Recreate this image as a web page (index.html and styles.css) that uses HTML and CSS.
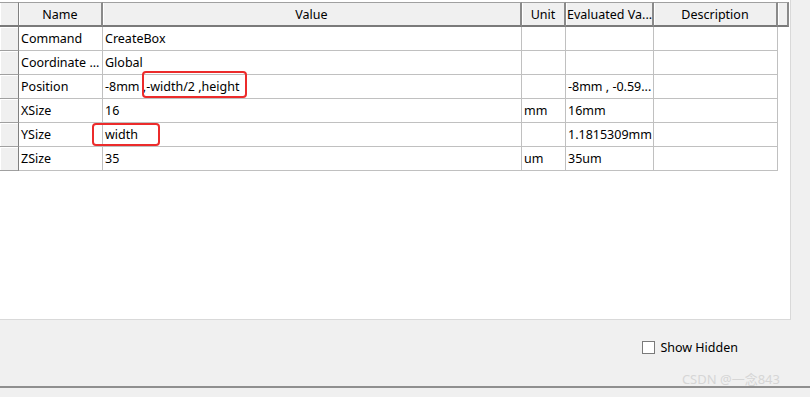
FILE: index.html
```html
<!DOCTYPE html>
<html lang="en">
<head>
    <meta charset="UTF-8">
    <title>Command Properties</title>
    <link rel="stylesheet" href="styles.css">
</head>
<body>
    <div class="panel">
        <div class="grid">
            <div class="hcell corner"></div>
            <div class="hcell">Name</div>
            <div class="hcell">Value</div>
            <div class="hcell">Unit</div>
            <div class="hcell left">Evaluated Va...</div>
            <div class="hcell">Description</div>
            <div class="hcell filler"></div>

            <div class="rhead"></div>
            <div class="cell">Command</div>
            <div class="cell">CreateBox</div>
            <div class="cell"></div>
            <div class="cell"></div>
            <div class="cell"></div>
            <div class="blank"></div>

            <div class="rhead"></div>
            <div class="cell">Coordinate ...</div>
            <div class="cell">Global</div>
            <div class="cell"></div>
            <div class="cell"></div>
            <div class="cell"></div>
            <div class="blank"></div>

            <div class="rhead"></div>
            <div class="cell">Position</div>
            <div class="cell">-8mm ,-width/2 ,height</div>
            <div class="cell"></div>
            <div class="cell">-8mm , -0.59...</div>
            <div class="cell"></div>
            <div class="blank"></div>

            <div class="rhead"></div>
            <div class="cell">XSize</div>
            <div class="cell">16</div>
            <div class="cell">mm</div>
            <div class="cell">16mm</div>
            <div class="cell"></div>
            <div class="blank"></div>

            <div class="rhead"></div>
            <div class="cell">YSize</div>
            <div class="cell">width</div>
            <div class="cell"></div>
            <div class="cell">1.1815309mm</div>
            <div class="cell"></div>
            <div class="blank"></div>

            <div class="rhead"></div>
            <div class="cell">ZSize</div>
            <div class="cell">35</div>
            <div class="cell">um</div>
            <div class="cell">35um</div>
            <div class="cell"></div>
            <div class="blank"></div>
        </div>

        <!-- annotation boxes drawn over the grid -->
        <div class="mark mark-position"></div>
        <div class="mark mark-ysize"></div>
    </div>

    <div class="options">
        <label class="check"><span class="box"></span>Show Hidden</label>
    </div>

    <div class="watermark">CSDN @一念843</div>
    <div class="statusbar"></div>
</body>
</html>
```

FILE: styles.css
```css
body {
    margin: 0;
    padding: 0;
    background-color: #f0f0f0;
    font-family: "Noto Sans", "Noto Sans CJK SC", sans-serif;
    font-size: 12px;
    color: #000;
}

.panel {
    position: relative;
    width: 791px;
    height: 320px;
    padding-top: 2px;
    box-sizing: border-box;
    background-color: #fff;
    border-right: 1px solid #d9d9d9;
    border-bottom: 1px solid #d9d9d9;
}

.grid {
    display: grid;
    grid-template-columns: 19px 84px 419px 44px 88px 124px 11px;
    grid-auto-rows: 24px;
    grid-template-rows: 25px;
    font-size: 12.5px;
}

.hcell {
    display: flex;
    align-items: center;
    justify-content: center;
    background-color: #f0f0f0;
    border-top: 1px solid #a0a0a0;
    border-right: 2px solid #8a8a8a;
    border-bottom: 2px solid #7a7a7a;
    box-shadow: inset 1px 0 #fff;
    white-space: nowrap;
    overflow: hidden;
}

.hcell.left {
    justify-content: flex-start;
    padding-left: 1px;
}

.hcell.corner {
    border-right: 1px solid #808080;
}

.rhead {
    background-color: #f0f0f0;
    border-right: 1px solid #808080;
    border-bottom: 1px solid #a0a0a0;
    box-shadow: inset 1px 1px #fff;
}

.cell {
    display: flex;
    align-items: center;
    padding-left: 2px;
    border-right: 1px solid #c0c0c0;
    border-bottom: 1px solid #c0c0c0;
    white-space: nowrap;
    overflow: hidden;
}

.mark {
    position: absolute;
    box-sizing: border-box;
    border: 2px solid #ec2b2b;
    border-radius: 4px;
}

.mark-position {
    left: 142px;
    top: 71px;
    width: 105px;
    height: 27px;
}

.mark-ysize {
    left: 92px;
    top: 123px;
    width: 68px;
    height: 23px;
}

.options {
    display: flex;
    justify-content: flex-end;
    padding: 20px 72px 0 0;
    height: 32px;
}

.check {
    display: flex;
    align-items: center;
    gap: 5px;
    font-size: 12.5px;
    height: 14px;
}

.box {
    width: 11px;
    height: 11px;
    background-color: #fff;
    border: 1px solid #7a7a7a;
}

.watermark {
    text-align: right;
    padding-right: 30px;
    height: 14px;
    line-height: 14px;
    font-size: 13px;
    color: #d6d6d6;
}

.statusbar {
    border-top: 2px solid #8f8f8f;
    height: 10px;
    background-color: #f0f0f0;
}
```
